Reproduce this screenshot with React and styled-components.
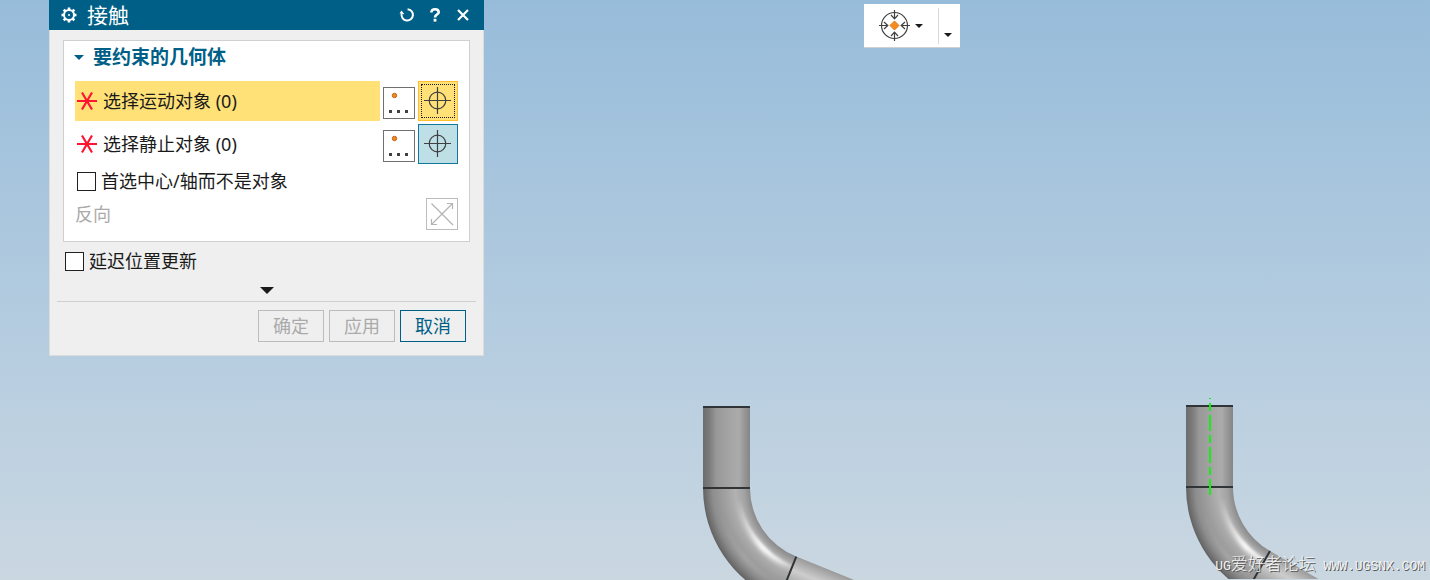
import { useState } from "react";
import styled, { createGlobalStyle } from "styled-components";

const GlobalStyle = createGlobalStyle`
  *, *::before, *::after {
    box-sizing: border-box;
  }
  body {
    margin: 0;
    font-family: "Noto Sans", "Noto Sans CJK SC", sans-serif;
    font-size: 18px;
    line-height: 24px;
    color: #1a1a1a;
  }
`;

const SELECTIONS = [
  { id: "move", label: "选择运动对象 (0)" },
  { id: "fixed", label: "选择静止对象 (0)" },
];

// point on a circle, angle in degrees measured from the left, going down
const polar = (cx, cy, r, deg) => {
  const a = (deg * Math.PI) / 180;
  return [cx - r * Math.cos(a), cy + r * Math.sin(a)];
};

function Pipe({ id, turn, axis }) {
  const top = 10;
  const seam = 92;
  const inner = 74;
  const outer = 121;
  const cx = outer;
  const [ix, iy] = polar(cx, seam, inner, turn);
  const [ox, oy] = polar(cx, seam, outer, turn);
  const a = (turn * Math.PI) / 180;
  const dx = Math.sin(a) * 200;
  const dy = Math.cos(a) * 200;
  const arc = (r) => {
    const [x, y] = polar(cx, seam, r, turn);
    return `M${cx - r} ${seam}A${r} ${r} 0 0 0 ${x} ${y}`;
  };

  return (
    <svg width="244" height="184" viewBox="0 0 244 184" aria-hidden="true">
      <defs>
        <linearGradient id={`${id}-straight`}>
          <stop offset="0" stopColor="#6c6c6c" />
          <stop offset="0.14" stopColor="#7c7c7c" />
          <stop offset="0.28" stopColor="#989898" />
          <stop offset="0.6" stopColor="#a6a6a6" />
          <stop offset="0.76" stopColor="#ababab" />
          <stop offset="0.9" stopColor="#949494" />
          <stop offset="1" stopColor="#858585" />
        </linearGradient>
        <radialGradient
          id={`${id}-bend`}
          gradientUnits="userSpaceOnUse"
          cx={cx}
          cy={seam}
          r={outer}
        >
          <stop offset="0.61" stopColor="#8a8a8a" />
          <stop offset="0.66" stopColor="#a2a2a2" />
          <stop offset="0.73" stopColor="#b2b2b2" />
          <stop offset="0.82" stopColor="#a0a0a0" />
          <stop offset="0.92" stopColor="#8e8e8e" />
          <stop offset="1" stopColor="#626262" />
        </radialGradient>
        <linearGradient
          id={`${id}-exit`}
          gradientUnits="userSpaceOnUse"
          x1={ix}
          y1={iy}
          x2={ox}
          y2={oy}
        >
          <stop offset="0" stopColor="#9a9a9a" />
          <stop offset="0.3" stopColor="#cdcdcd" />
          <stop offset="0.6" stopColor="#a4a4a4" />
          <stop offset="1" stopColor="#666666" />
        </linearGradient>
        <linearGradient
          id={`${id}-shine`}
          gradientUnits="userSpaceOnUse"
          x1="40"
          y1="100"
          x2="84"
          y2="176"
        >
          <stop offset="0" stopColor="#fff" stopOpacity="0" />
          <stop offset="0.4" stopColor="#fff" stopOpacity="0.5" />
          <stop offset="0.62" stopColor="#fff" />
          <stop offset="0.85" stopColor="#fff" stopOpacity="0.6" />
          <stop offset="1" stopColor="#fff" stopOpacity="0.2" />
        </linearGradient>
        <filter id={`${id}-soft`} x="-20%" y="-20%" width="140%" height="140%">
          <feGaussianBlur stdDeviation="2" />
        </filter>
        <filter id={`${id}-sharp`} x="-20%" y="-20%" width="140%" height="140%">
          <feGaussianBlur stdDeviation="1" />
        </filter>
        <clipPath id={`${id}-clip`}>
          <path
            d={`M0 ${seam}A${outer} ${outer} 0 0 0 ${ox} ${oy}L${ix} ${iy}A${inner} ${inner} 0 0 1 ${cx - inner} ${seam}Z`}
          />
        </clipPath>
      </defs>
      <path
        fill={`url(#${id}-exit)`}
        d={`M${ix} ${iy}L${ix + dx} ${iy + dy}L${ox + dx} ${oy + dy}L${ox} ${oy}Z`}
      />
      <g clipPath={`url(#${id}-clip)`}>
        <rect y={seam} width="160" height="140" fill={`url(#${id}-bend)`} />
        <g fill="none" stroke={`url(#${id}-shine)`}>
          <path d={arc(86)} strokeWidth="5" filter={`url(#${id}-soft)`} />
          <path
            d={arc(85)}
            strokeWidth="3"
            opacity="0.7"
            filter={`url(#${id}-sharp)`}
          />
          <path
            d={arc(106)}
            strokeWidth="3"
            opacity="0.25"
            filter={`url(#${id}-soft)`}
          />
        </g>
      </g>
      <rect y={top} width="47" height={seam - top} fill={`url(#${id}-straight)`} />
      <path
        d={`M0 ${top + 1}H47M0 ${seam}H47M${ix} ${iy}L${ox} ${oy}`}
        stroke="#303436"
        strokeWidth="2"
      />
      {axis && (
        <path
          d="M24 3v1M24 8v8M24 20v16M24 40v8M24 52v16M24 72v8M24 84v16"
          stroke="#14f014"
          strokeWidth="2"
        />
      )}
    </svg>
  );
}

const GearIcon = () => (
  <svg width="16" height="16" viewBox="0 0 16 16" fill="none" stroke="#fff">
    <circle cx="8" cy="8" r="5" strokeWidth="2" />
    {[0, 45, 90, 135, 180, 225, 270, 315].map((deg) => (
      <path
        key={deg}
        d="M8 0.5V3"
        strokeWidth="2.6"
        transform={`rotate(${deg} 8 8)`}
      />
    ))}
    <circle cx="8" cy="8" r="1" fill="#fff" stroke="none" />
  </svg>
);

const ResetIcon = () => (
  <svg width="16" height="16" viewBox="0 0 16 16" fill="none" stroke="#fff">
    <path d="M8.6 2.2A5.7 5.7 0 1 1 2.6 7" strokeWidth="2" />
    <path d="M0.6 6.6L2.4 3.4L5.4 7.2Z" fill="#fff" stroke="none" />
  </svg>
);

const HelpIcon = () => (
  <svg width="16" height="16" viewBox="0 0 16 16" fill="none" stroke="#fff">
    <path
      d="M4.4 5.4C4.4 3.2 5.8 2.2 8 2.2C10.3 2.2 11.7 3.4 11.7 5.2C11.7 7.6 8 7.5 8 10.4"
      strokeWidth="2.6"
    />
    <path d="M8 11.8v2.8" strokeWidth="2.8" />
  </svg>
);

const CloseIcon = () => (
  <svg width="16" height="16" viewBox="0 0 16 16" stroke="#fff">
    <path d="M3 3L13 13M13 3L3 13" strokeWidth="2.2" />
  </svg>
);

const StarIcon = () => (
  <svg width="20" height="20" viewBox="0 0 20 20" stroke="#ff1432">
    <path d="M0 10H20M5 1.5L15 18.5M15 1.5L5 18.5" strokeWidth="2.2" />
  </svg>
);

const PointIcon = () => (
  <svg width="30" height="30" viewBox="0 0 30 30" fill="#404040">
    <circle cx="10.5" cy="7.5" r="2.2" fill="#f08c1e" stroke="#c8601c" />
    <path d="M5 22h3v3h-3zM13 22h3v3h-3zM21 22h3v3h-3z" />
  </svg>
);

const TargetIcon = () => (
  <svg width="28" height="28" viewBox="0 0 28 28" fill="none" stroke="#404040">
    <circle cx="13.5" cy="13.5" r="8.3" strokeWidth="1.2" />
    <path d="M0 13.5H27M13.5 0V27" strokeWidth="1.2" />
  </svg>
);

const ReverseIcon = () => (
  <svg width="30" height="30" viewBox="0 0 30 30" fill="none" stroke="#b4b4b4">
    <path d="M4.5 4.5L26 26M4.5 25.5L25.5 4.5" strokeWidth="1.2" />
    <path d="M20 4.5H25.5V10M4.5 20V25.5H10" strokeWidth="1.2" />
  </svg>
);

const SnapIcon = () => (
  <svg width="32" height="32" viewBox="0 0 32 32" fill="none" stroke="#404040">
    <circle cx="15.5" cy="15.5" r="13" strokeWidth="1.2" />
    {[0, 90, 180, 270].map((deg) => (
      <path
        key={deg}
        d="M15.5 0V8.5M12 5L15.5 8.8L19 5"
        strokeWidth="1.2"
        transform={`rotate(${deg} 15.5 15.5)`}
      />
    ))}
    <path
      d="M15.5 11L20 15.5L15.5 20L11 15.5Z"
      fill="#f68b1e"
      stroke="#e07818"
    />
  </svg>
);

export default function App() {
  const [active, setActive] = useState("move");
  const [preferCenter, setPreferCenter] = useState(false);
  const [delayUpdate, setDelayUpdate] = useState(false);

  return (
    <Viewport>
      <GlobalStyle />
      <LeftPipe>
        <Pipe id="left" turn={68} />
      </LeftPipe>
      <RightPipe>
        <Pipe id="right" turn={60} axis />
      </RightPipe>

      <Toolbar>
        <SnapButton type="button" aria-label="捕捉点">
          <SnapIcon />
          <Caret />
        </SnapButton>
        <Overflow type="button" aria-label="更多">
          <Caret />
        </Overflow>
      </Toolbar>

      <Dialog role="dialog" aria-labelledby="dialog-title">
        <TitleBar>
          <GearIcon />
          <Title id="dialog-title">接触</Title>
          <TitleButton type="button" aria-label="重置">
            <ResetIcon />
          </TitleButton>
          <TitleButton type="button" aria-label="帮助">
            <HelpIcon />
          </TitleButton>
          <TitleButton type="button" aria-label="关闭">
            <CloseIcon />
          </TitleButton>
        </TitleBar>

        <Body>
          <Group>
            <GroupHeader type="button">
              <Caret $size={5} />
              要约束的几何体
            </GroupHeader>
            <Rows>
              {SELECTIONS.map(({ id, label }) => (
                <Row key={id}>
                  <RowLabel $active={active === id}>
                    <StarIcon />
                    {label}
                  </RowLabel>
                  <PointButton type="button" aria-label="点对话框">
                    <PointIcon />
                  </PointButton>
                  <TargetButton
                    type="button"
                    aria-label={label}
                    $active={active === id}
                    onClick={() => setActive(id)}
                  >
                    <TargetIcon />
                  </TargetButton>
                </Row>
              ))}
            </Rows>
            <CheckRow $inset>
              <Checkbox
                type="checkbox"
                checked={preferCenter}
                onChange={(e) => setPreferCenter(e.target.checked)}
              />
              首选中心/轴而不是对象
            </CheckRow>
            <ReverseRow>
              反向
              <SquareButton type="button" aria-label="反向" disabled>
                <ReverseIcon />
              </SquareButton>
            </ReverseRow>
          </Group>

          <CheckRow>
            <Checkbox
              type="checkbox"
              checked={delayUpdate}
              onChange={(e) => setDelayUpdate(e.target.checked)}
            />
            延迟位置更新
          </CheckRow>
          <MoreButton type="button" aria-label="展开">
            <Caret $size={7} />
          </MoreButton>
          <Footer>
            <ActionButton type="button" disabled>
              确定
            </ActionButton>
            <ActionButton type="button" disabled>
              应用
            </ActionButton>
            <ActionButton type="button">取消</ActionButton>
          </Footer>
        </Body>
      </Dialog>

      <Watermark>
        UG<WatermarkName>爱好者论坛</WatermarkName> WWW.UGSNX.COM
      </Watermark>
    </Viewport>
  );
}

const Viewport = styled.main`
  position: relative;
  min-height: 100vh;
  overflow: hidden;
  background: linear-gradient(#97bcda, #b6cde0 60%, #cad7e1);
`;
const LeftPipe = styled.div`
  position: absolute;
  left: 703px;
  top: 396px;
  svg {
    display: block;
  }
`;
const RightPipe = styled(LeftPipe)`
  left: auto;
  right: 0;
  top: 395px;
`;
const Toolbar = styled.div`
  position: absolute;
  left: 864px;
  top: 4px;
  display: flex;
  align-items: center;
  width: 96px;
  padding: 4px 0 3px;
  background: #fff;
  border-bottom: 1px solid #d0d0d0;
`;
const BareButton = styled.button`
  display: flex;
  align-items: center;
  padding: 0;
  border: 0;
  background: none;
  color: inherit;
  font: inherit;
`;
const SnapButton = styled(BareButton)`
  flex: 1;
  gap: 4px;
  height: 36px;
  padding-left: 15px;
  border-right: 1px solid #d8d8d8;
`;
const Overflow = styled(BareButton)`
  align-self: flex-end;
  width: 21px;
  height: 18px;
  padding-left: 5px;
`;
const Caret = styled.span`
  flex: none;
  border: ${({ $size = 4 }) => $size}px solid transparent;
  border-top-color: currentColor;
  border-bottom: 0;
`;
const Dialog = styled.section`
  position: absolute;
  left: 49px;
  top: 0;
  width: 435px;
  max-width: 100%;
`;
const TitleBar = styled.header`
  display: flex;
  align-items: center;
  height: 30px;
  padding: 0 13px 0 12px;
  background: #005f87;
  color: #fff;
`;
const Title = styled.h1`
  flex: 1;
  margin: 0 0 0 10px;
  font-size: 21px;
  font-weight: 400;
  line-height: 28px;
`;
const TitleButton = styled(BareButton)`
  margin-left: 12px;
`;
const Body = styled.div`
  padding: 10px 13px 13px;
  border: 1px solid #dcdcdc;
  border-top: 0;
  background: #efefef;
`;
const Group = styled.div`
  padding: 0 11px 11px;
  border: 1px solid #d0d0d0;
  background: #fff;
`;
const GroupHeader = styled(BareButton)`
  gap: 9px;
  height: 32px;
  margin-left: -1px;
  color: #005f87;
  font-size: 19px;
  font-weight: 700;
`;
const Rows = styled.div`
  display: grid;
  gap: 3px;
  margin-top: 8px;
`;
const Row = styled.div`
  display: flex;
  align-items: center;
  gap: 3px;
`;
const RowLabel = styled.span`
  display: flex;
  flex: 1;
  align-items: center;
  gap: 6px;
  height: 40px;
  padding-left: 2px;
  background: ${({ $active }) => ($active ? "#ffe178" : "none")};
`;
const SquareButton = styled(BareButton)`
  width: 32px;
  height: 32px;
  border: 1px solid #707070;
  background: #fff;
  &:disabled {
    border-color: #bcbcbc;
  }
`;
const PointButton = styled(SquareButton)`
  align-self: flex-end;
  margin-bottom: 2px;
`;
const TargetButton = styled(BareButton)`
  justify-content: center;
  width: 40px;
  height: 40px;
  border: 1px solid ${({ $active }) => ($active ? "#ffbe2d" : "#0f789b")};
  background: ${({ $active }) => ($active ? "#ffe178" : "#bedfe6")};
  outline: ${({ $active }) => ($active ? "1px dotted #1a1a1a" : "none")};
  outline-offset: -4px;
`;
const CheckRow = styled.label`
  display: flex;
  align-items: center;
  gap: 5px;
  height: ${({ $inset }) => ($inset ? 34 : 38)}px;
  padding-left: 2px;
`;
const Checkbox = styled.input`
  appearance: none;
  flex: none;
  width: 19px;
  height: 19px;
  margin: 0;
  border: 1px solid #202020;
  background: #fff;
  &:checked {
    box-shadow: inset 0 0 0 3px #fff;
    background: #005f87;
  }
`;
const ReverseRow = styled.div`
  display: flex;
  align-items: center;
  justify-content: space-between;
  color: #aaa;
`;
const MoreButton = styled(BareButton)`
  justify-content: center;
  width: 100%;
  height: 21px;
`;
const Footer = styled.footer`
  display: flex;
  justify-content: flex-end;
  gap: 5px;
  margin: 0 -6px;
  padding: 8px 10px 0;
  border-top: 1px solid #d0d0d0;
`;
const ActionButton = styled(BareButton)`
  justify-content: center;
  width: 66px;
  height: 32px;
  border: 1px solid #005f87;
  color: #005f87;
  &:disabled {
    border-color: #bcbcbc;
    color: #aaa;
  }
`;
const Watermark = styled.p`
  position: absolute;
  right: 5px;
  bottom: 1px;
  margin: 0;
  color: #f4f4f4;
  font-family: "Liberation Mono", "Noto Sans CJK SC", monospace;
  font-size: 13px;
  text-shadow: 1px 1px 0 #555;
`;
const WatermarkName = styled.span`
  font-size: 17px;
  font-weight: 300;
`;
